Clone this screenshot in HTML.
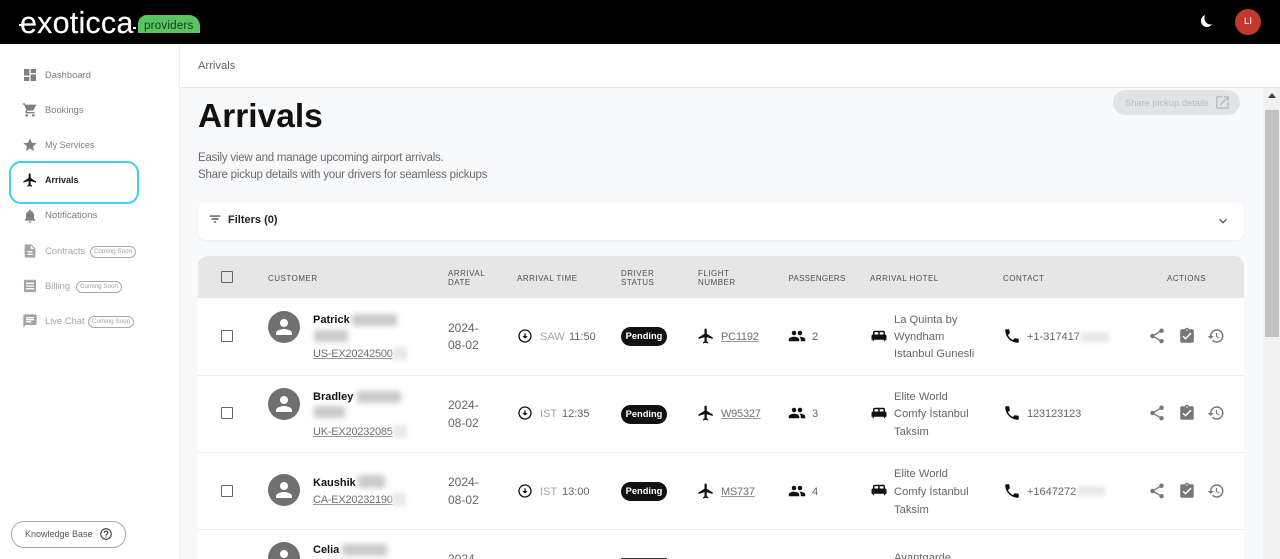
<!DOCTYPE html>
<html lang="en"><head><meta charset="utf-8"><title>Arrivals</title>
<style>
html,body{margin:0;padding:0;width:1280px;height:559px;overflow:hidden}
body{font-family:"Liberation Sans",sans-serif;color:#666}
#p{position:absolute;left:0;top:0;width:1280px;height:559px;overflow:hidden;background:#f8f9fb}
.a{position:absolute}
.t{position:absolute;white-space:nowrap;line-height:18px;font-size:12px}
svg{position:absolute;display:block}
.nav{font-size:9.4px;color:#7d7d7d}
.dis{color:#a5a5a5}
.soon{position:absolute;height:10px;width:44px;border:1px solid #aaa;border-radius:7px;font-size:6.3px;line-height:10px;text-align:center;color:#a0a0a0;white-space:nowrap;box-sizing:content-box}
.th{position:absolute;font-size:8px;line-height:9px;letter-spacing:.5px;color:#505050;white-space:nowrap}
.row{position:absolute;left:198px;width:1046px;background:#fff;border-bottom:1px solid #ececec}
.cb{position:absolute;left:221px;width:10px;height:10px;border:1.5px solid #666;border-radius:1px}
.pill{position:absolute;left:621px;width:46px;height:19px;border-radius:10px;background:#111;color:#fff;font-size:9.3px;font-weight:bold;line-height:19px;text-align:center}
.nm{font-weight:bold;color:#111;font-size:11px}
.lk{text-decoration:underline;color:#707070;text-decoration-color:#999;font-size:11px;letter-spacing:-.22px}
.h{font-size:11.2px}
.bl{position:absolute;background:#c9c9c9;filter:blur(3px);border-radius:2px}
.bl2{position:absolute;background:#e9e9e9;filter:blur(2px)}
</style></head><body><div id="p">

<!-- top bar -->
<div class="a" style="left:0;top:0;width:1280px;height:44px;background:#000"></div>
<div class="t" style="left:20px;top:6px;line-height:34px;font-size:30.5px;color:#fff;letter-spacing:.2px;-webkit-text-stroke:.15px #fff">exoticca</div>
<div class="a" style="left:19px;top:24px;width:3px;height:2px;background:#fff"></div>
<div class="a" style="left:133px;top:27px;width:3px;height:2px;background:#fff"></div>
<div class="a" style="left:138px;top:15px;width:62px;height:18px;background:#5ac463;border-radius:9px 11px 0 0"></div>
<div class="t" style="left:144px;top:17px;font-size:11.5px;color:#103a16;letter-spacing:.25px">providers</div>
<svg style="left:1199px;top:14px" width="15" height="15" viewBox="0 0 15 15"><path fill="#fff" d="M6 1C3.400 2.200 1.600 4.500 2 7.500 2.400 11 5.300 13.400 8.700 13c1.700-.2 3.300-1.200 4.300-2.700-2.600.7-5.200-.3-6.500-2.500C5.300 5.700 5.200 3.200 6 1z"/></svg>
<div class="a" style="left:1235px;top:9px;width:26px;height:26px;border-radius:50%;background:#c0392b;color:#fff;font-size:9.5px;line-height:26px;text-align:center">LI</div>

<!-- sidebar -->
<div class="a" style="left:0;top:44px;width:179px;height:515px;background:#fff;border-right:1px solid #eceef0"></div>
<svg style="left:22px;top:67px" width="16" height="16" viewBox="0 0 24 24" fill="#808080"><path d="M3 13h8V3H3v10zm0 8h8v-6H3v6zm10 0h8V11h-8v10zm0-18v6h8V3h-8z"/></svg>
<div class="t nav" style="left:45px;top:66px">Dashboard</div>
<svg style="left:22px;top:102px" width="16" height="16" viewBox="0 0 24 24" fill="#808080"><path d="M7 18c-1.100 0-1.990.9-1.990 2S5.900 22 7 22s2-.9 2-2-.9-2-2-2zM1 2v2h2l3.600 7.590-1.350 2.450c-.16.28-.25.61-.25.96 0 1.100.9 2 2 2h12v-2H7.420c-.14 0-.25-.11-.25-.25l.03-.12.9-1.630h7.450c.75 0 1.410-.41 1.750-1.030l3.580-6.490c.08-.14.12-.31.12-.48 0-.55-.45-1-1-1H5.210l-.94-2H1zm16 16c-1.100 0-1.990.9-1.990 2s.89 2 1.990 2 2-.9 2-2-.9-2-2-2z"/></svg>
<div class="t nav" style="left:45px;top:101px">Bookings</div>
<svg style="left:22px;top:137px" width="16" height="16" viewBox="0 0 24 24" fill="#808080"><path d="M12 17.270L18.180 21l-1.640-7.030L22 9.240l-7.190-.61L12 2 9.190 8.630 2 9.240l5.460 4.730L5.820 21z"/></svg>
<div class="t nav" style="left:45px;top:136px;font-size:9.1px">My Services</div>

<div class="a" style="left:9px;top:161px;width:126px;height:39px;border:2.500px solid #3fcdf0;border-radius:12px"></div>
<svg style="left:22px;top:172px" width="16" height="16" viewBox="0 0 24 24" fill="#111"><path d="M21 16v-2l-8-5V3.500c0-.83-.67-1.500-1.500-1.500S10 2.670 10 3.500V9l-8 5v2l8-2.500V19l-2 1.500V22l3.500-1 3.500 1v-1.500L13 19v-5.500l8 2.500z"/></svg>
<div class="t" style="left:45px;top:171px;font-size:9px;font-weight:bold;color:#222">Arrivals</div>

<svg style="left:22px;top:208px" width="16" height="16" viewBox="0 0 24 24" fill="#808080"><path d="M12 22c1.100 0 2-.9 2-2h-4c0 1.100.89 2 2 2zm6-6v-5c0-3.070-1.640-5.640-4.500-6.320V4c0-.83-.67-1.500-1.500-1.500s-1.500.67-1.500 1.500v.68C7.630 5.360 6 7.920 6 11v5l-2 2v1h16v-1l-2-2z"/></svg>
<div class="t nav" style="left:45px;top:207px;font-size:9.6px">Notifications</div>
<svg style="left:22px;top:243px" width="16" height="16" viewBox="0 0 24 24" fill="#a0a4ab"><path d="M14 2H6c-1.100 0-1.990.9-1.990 2L4 20c0 1.100.89 2 1.990 2H18c1.100 0 2-.9 2-2V8l-6-6zm2 16H8v-2h8v2zm0-4H8v-2h8v2zm-3-5V3.500L18.500 9H13z"/></svg>
<div class="t nav dis" style="left:45px;top:242px">Contracts</div>
<div class="soon" style="left:90px;top:246px">Coming Soon</div>
<svg style="left:22px;top:278px" width="16" height="16" viewBox="0 0 24 24" fill="#a0a4ab"><path d="M18 17H6v-2h12v2zm0-4H6v-2h12v2zm0-4H6V7h12v2zM3 22l1.500-1.500L6 22l1.500-1.500L9 22l1.500-1.500L12 22l1.500-1.500L15 22l1.500-1.500L18 22l1.500-1.500L21 22V2l-1.500 1.500L18 2l-1.500 1.500L15 2l-1.500 1.500L12 2l-1.500 1.500L9 2 7.500 3.500 6 2 4.500 3.500 3 2v20z"/></svg>
<div class="t nav dis" style="left:45px;top:277px">Billing</div>
<div class="soon" style="left:76px;top:281px">Coming Soon</div>
<svg style="left:22px;top:313px" width="16" height="16" viewBox="0 0 24 24" fill="#a0a4ab"><path d="M20 2H4c-1.100 0-1.990.9-1.990 2L2 22l4-4h14c1.100 0 2-.9 2-2V4c0-1.100-.9-2-2-2zM6 9h12v2H6V9zm8 5H6v-2h8v2zm4-6H6V6h12v2z"/></svg>
<div class="t nav dis" style="left:45px;top:312px">Live Chat</div>
<div class="soon" style="left:88px;top:316px">Coming Soon</div>

<div class="a" style="left:11px;top:521px;width:113px;height:25px;border:1px solid #aaa;border-radius:13px;background:#fff"></div>
<div class="t" style="left:25px;top:525px;font-size:9px;color:#555">Knowledge Base</div>
<svg style="left:99px;top:527px" width="14" height="14" viewBox="0 0 24 24" fill="#444"><path d="M11 18h2v-2h-2v2zm1-16C6.480 2 2 6.480 2 12s4.480 10 10 10 10-4.480 10-10S17.520 2 12 2zm0 18c-4.410 0-8-3.590-8-8s3.590-8 8-8 8 3.590 8 8-3.590 8-8 8zm0-14c-2.210 0-4 1.790-4 4h2c0-1.100.9-2 2-2s2 .9 2 2c0 2-3 1.750-3 5h2c0-2.250 3-2.500 3-5 0-2.210-1.790-4-4-4z"/></svg>

<!-- breadcrumb -->
<div class="a" style="left:180px;top:44px;width:1100px;height:43px;background:#fff;border-bottom:1px solid #e6e8ea"></div>
<div class="t" style="left:198px;top:57px;font-size:11.2px;color:#666">Arrivals</div>

<!-- heading -->
<div class="t" style="left:198px;top:96px;line-height:42px;font-size:33.5px;font-weight:bold;color:#111">Arrivals</div>
<div class="t" style="left:198px;top:149px;font-size:11.5px;color:#6a6a6a;letter-spacing:-.22px">Easily view and manage upcoming airport arrivals.</div>
<div class="t" style="left:198px;top:166px;font-size:11.5px;color:#6a6a6a;letter-spacing:-.2px">Share pickup details with your drivers for seamless pickups</div>

<div class="a" style="left:1113px;top:90px;width:127px;height:25px;border-radius:13px;background:#e1e3e6"></div>
<div class="t" style="left:1125px;top:94px;font-size:9.3px;color:#b8babe">Share pickup details</div>
<svg style="left:1214px;top:94px" width="17" height="17" viewBox="0 0 24 24" fill="#b8babe"><path d="M19 19H5V5h7V3H5c-1.110 0-2 .9-2 2v14c0 1.100.89 2 2 2h14c1.100 0 2-.9 2-2v-7h-2v7zM14 3v2h3.590l-9.830 9.830 1.410 1.410L19 6.410V10h2V3h-7z"/></svg>

<!-- filters -->
<div class="a" style="left:198px;top:202px;width:1046px;height:38px;background:#fff;border-radius:8px;box-shadow:0 1px 2px rgba(0,0,0,.05)"></div>
<svg style="left:208px;top:212px" width="14" height="14" viewBox="0 0 24 24" fill="#333"><path d="M10 18h4v-2h-4v2zM3 6v2h18V6H3zm3 7h12v-2H6v2z"/></svg>
<div class="t" style="left:228px;top:211px;font-size:11px;font-weight:bold;color:#222">Filters (0)</div>
<svg style="left:1215px;top:213px" width="16" height="16" viewBox="0 0 24 24" fill="#555"><path d="M16.590 8.590L12 13.170 7.410 8.590 6 10l6 6 6-6z"/></svg>

<!-- table header -->
<div class="a" style="left:198px;top:256px;width:1046px;height:42px;background:#e6e6e6;border-radius:10px 10px 0 0"></div>
<div class="cb" style="top:271px"></div>
<div class="th" style="left:268px;top:274px">CUSTOMER</div>
<div class="th" style="left:448px;top:269px">ARRIVAL<br>DATE</div>
<div class="th" style="left:517px;top:274px">ARRIVAL TIME</div>
<div class="th" style="left:621px;top:269px">DRIVER<br>STATUS</div>
<div class="th" style="left:698px;top:269px">FLIGHT<br>NUMBER</div>
<div class="th" style="left:788.500px;top:274px;letter-spacing:.25px">PASSENGERS</div>
<div class="th" style="left:870px;top:274px">ARRIVAL HOTEL</div>
<div class="th" style="left:1003px;top:274px">CONTACT</div>
<div class="th" style="left:1167px;top:274px">ACTIONS</div>

<!-- rows -->
<div class="row" style="top:298px;height:77px"></div>
<div class="row" style="top:376px;height:76px"></div>
<div class="row" style="top:453px;height:76px"></div>
<div class="row" style="top:530px;height:29px;border-bottom:0"></div>

<!-- ROW 1 -->
<div class="cb" style="top:330px"></div>
<div class="a" style="left:268px;top:311px;width:32px;height:32px;border-radius:50%;background:#707070"></div>
<svg style="left:272px;top:315px" width="24" height="24" viewBox="0 0 24 24" fill="#fff"><path d="M12 12c2.210 0 4-1.790 4-4s-1.790-4-4-4-4 1.790-4 4 1.790 4 4 4zm0 2c-2.670 0-8 1.340-8 4v2h16v-2c0-2.660-5.330-4-8-4z"/></svg>
<div class="t nm" style="left:313px;top:311px">Patrick</div>
<div class="bl" style="left:352px;top:314px;width:45px;height:12px"></div>
<div class="bl" style="left:314px;top:330px;width:34px;height:12px"></div>
<div class="t lk" style="left:313px;top:345px">US-EX20242500</div>
<div class="bl2" style="left:393px;top:347px;width:14px;height:13px"></div>
<div class="t" style="left:448px;top:319px">2024-</div>
<div class="t" style="left:448px;top:336px">08-02</div>
<svg style="left:517px;top:328px" width="16" height="16" viewBox="0 0 24 24" fill="#111"><path d="M12 4c4.410 0 8 3.590 8 8s-3.590 8-8 8-8-3.590-8-8 3.590-8 8-8m0-2C6.480 2 2 6.480 2 12s4.480 10 10 10 10-4.480 10-10S17.520 2 12 2zm1 10V8h-2v4H8l4 4 4-4h-3z"/></svg>
<div class="t" style="left:540px;top:328px;font-size:11px;color:#a5a5a5">SAW</div>
<div class="t" style="left:569px;top:328px;font-size:11px">11:50</div>
<div class="pill" style="top:327px">Pending</div>
<svg style="left:697px;top:327px" width="18" height="18" viewBox="0 0 24 24" fill="#111"><path d="M21 16v-2l-8-5V3.500c0-.83-.67-1.500-1.500-1.500S10 2.670 10 3.500V9l-8 5v2l8-2.500V19l-2 1.500V22l3.500-1 3.500 1v-1.500L13 19v-5.500l8 2.500z"/></svg>
<div class="t lk" style="left:721px;top:328px">PC1192</div>
<svg style="left:788px;top:327px" width="18" height="18" viewBox="0 0 24 24" fill="#111"><path d="M16 11c1.660 0 2.990-1.340 2.990-3S17.660 5 16 5c-1.660 0-3 1.340-3 3s1.340 3 3 3zm-8 0c1.660 0 2.990-1.340 2.990-3S9.660 5 8 5C6.340 5 5 6.340 5 8s1.340 3 3 3zm0 2c-2.330 0-7 1.170-7 3.500V19h14v-2.500c0-2.330-4.670-3.500-7-3.500zm8 0c-.29 0-.62.02-.97.05 1.160.84 1.970 1.970 1.970 3.450V19h6v-2.500c0-2.330-4.670-3.500-7-3.500z"/></svg>
<div class="t" style="left:812px;top:328px;font-size:11.2px">2</div>
<svg style="left:870px;top:327px" width="18" height="18" viewBox="0 0 24 24" fill="#111"><path d="M20 10V7c0-1.100-.9-2-2-2H6c-1.100 0-2 .9-2 2v3c-1.100 0-2 .9-2 2v5h1.330L4 19h1l.67-2h12.670l.66 2h1l.67-2H22v-5c0-1.100-.9-2-2-2zm-9 0H6V7h5v3zm7 0h-5V7h5v3z"/></svg>
<div class="t h" style="left:894px;top:311px">La Quinta by</div>
<div class="t h" style="left:894px;top:328px">Wyndham</div>
<div class="t h" style="left:894px;top:345px">Istanbul Gunesli</div>
<svg style="left:1003px;top:327px" width="18" height="18" viewBox="0 0 24 24" fill="#111"><path d="M6.620 10.790c1.440 2.830 3.760 5.140 6.590 6.590l2.200-2.200c.27-.27.67-.36 1.020-.24 1.120.37 2.330.57 3.570.57.55 0 1 .45 1 1V20c0 .55-.45 1-1 1-9.390 0-17-7.610-17-17 0-.55.45-1 1-1h3.500c.55 0 1 .45 1 1 0 1.250.2 2.450.57 3.570.11.35.03.74-.25 1.020l-2.200 2.200z"/></svg>
<div class="t" style="left:1027px;top:328px;font-size:11px">+1-317417</div>
<div class="bl2" style="left:1080px;top:332px;width:29px;height:10px"></div>
<svg style="left:1148px;top:327px" width="18" height="18" viewBox="0 0 24 24" fill="#777"><path d="M18 16.080c-.76 0-1.440.3-1.960.77L8.910 12.700c.05-.23.09-.46.09-.7s-.04-.47-.09-.7l7.050-4.110c.54.5 1.250.81 2.040.81 1.660 0 3-1.340 3-3s-1.340-3-3-3-3 1.340-3 3c0 .24.04.47.09.7L8.040 9.810C7.500 9.310 6.790 9 6 9c-1.660 0-3 1.340-3 3s1.340 3 3 3c.79 0 1.500-.31 2.040-.81l7.120 4.160c-.05.21-.08.43-.08.65 0 1.610 1.310 2.920 2.920 2.920 1.610 0 2.920-1.310 2.920-2.920s-1.310-2.920-2.920-2.920z"/></svg>
<svg style="left:1178px;top:327px" width="18" height="18" viewBox="0 0 24 24" fill="#777"><path d="M19 3h-4.180C14.400 1.840 13.300 1 12 1c-1.300 0-2.400.84-2.820 2H5c-1.100 0-2 .9-2 2v14c0 1.100.9 2 2 2h14c1.100 0 2-.9 2-2V5c0-1.100-.9-2-2-2zm-7 0c.55 0 1 .45 1 1s-.45 1-1 1-1-.45-1-1 .45-1 1-1zm-2 14l-4-4 1.410-1.410L10 14.170l6.590-6.590L18 9l-8 8z"/></svg>
<svg style="left:1207px;top:327px" width="18" height="18" viewBox="0 0 24 24" fill="#777"><path d="M13 3c-4.970 0-9 4.030-9 9H1l3.890 3.890.07.14L9 12H6c0-3.870 3.130-7 7-7s7 3.130 7 7-3.130 7-7 7c-1.930 0-3.680-.79-4.940-2.060l-1.420 1.420C8.270 19.990 10.510 21 13 21c4.970 0 9-4.030 9-9s-4.030-9-9-9zm-1 5v5l4.280 2.540.72-1.210-3.500-2.080V8H12z"/></svg>

<!-- ROW 2 -->
<div class="cb" style="top:407px"></div>
<div class="a" style="left:268px;top:388px;width:32px;height:32px;border-radius:50%;background:#707070"></div>
<svg style="left:272px;top:392px" width="24" height="24" viewBox="0 0 24 24" fill="#fff"><path d="M12 12c2.210 0 4-1.790 4-4s-1.790-4-4-4-4 1.790-4 4 1.790 4 4 4zm0 2c-2.670 0-8 1.340-8 4v2h16v-2c0-2.660-5.330-4-8-4z"/></svg>
<div class="t nm" style="left:313px;top:388px">Bradley</div>
<div class="bl" style="left:357px;top:391px;width:44px;height:12px"></div>
<div class="bl" style="left:314px;top:406px;width:31px;height:12px"></div>
<div class="t lk" style="left:313px;top:423px">UK-EX20232085</div>
<div class="bl2" style="left:393px;top:425px;width:14px;height:13px"></div>
<div class="t" style="left:448px;top:396px">2024-</div>
<div class="t" style="left:448px;top:414px">08-02</div>
<svg style="left:517px;top:405px" width="16" height="16" viewBox="0 0 24 24" fill="#111"><path d="M12 4c4.410 0 8 3.590 8 8s-3.590 8-8 8-8-3.590-8-8 3.590-8 8-8m0-2C6.480 2 2 6.480 2 12s4.480 10 10 10 10-4.480 10-10S17.520 2 12 2zm1 10V8h-2v4H8l4 4 4-4h-3z"/></svg>
<div class="t" style="left:540px;top:405px;font-size:11px;color:#a5a5a5">IST</div>
<div class="t" style="left:562px;top:405px;font-size:11px">12:35</div>
<div class="pill" style="top:405px">Pending</div>
<svg style="left:697px;top:404px" width="18" height="18" viewBox="0 0 24 24" fill="#111"><path d="M21 16v-2l-8-5V3.500c0-.83-.67-1.500-1.500-1.500S10 2.670 10 3.500V9l-8 5v2l8-2.500V19l-2 1.500V22l3.500-1 3.500 1v-1.500L13 19v-5.500l8 2.500z"/></svg>
<div class="t lk" style="left:721px;top:405px">W95327</div>
<svg style="left:788px;top:404px" width="18" height="18" viewBox="0 0 24 24" fill="#111"><path d="M16 11c1.660 0 2.990-1.340 2.990-3S17.660 5 16 5c-1.660 0-3 1.340-3 3s1.340 3 3 3zm-8 0c1.660 0 2.990-1.340 2.990-3S9.660 5 8 5C6.340 5 5 6.340 5 8s1.340 3 3 3zm0 2c-2.330 0-7 1.170-7 3.500V19h14v-2.500c0-2.330-4.670-3.500-7-3.500zm8 0c-.29 0-.62.02-.97.05 1.160.84 1.970 1.970 1.970 3.450V19h6v-2.500c0-2.330-4.670-3.500-7-3.500z"/></svg>
<div class="t" style="left:812px;top:405px;font-size:11.2px">3</div>
<svg style="left:870px;top:404px" width="18" height="18" viewBox="0 0 24 24" fill="#111"><path d="M20 10V7c0-1.100-.9-2-2-2H6c-1.100 0-2 .9-2 2v3c-1.100 0-2 .9-2 2v5h1.330L4 19h1l.67-2h12.670l.66 2h1l.67-2H22v-5c0-1.100-.9-2-2-2zm-9 0H6V7h5v3zm7 0h-5V7h5v3z"/></svg>
<div class="t h" style="left:894px;top:388px">Elite World</div>
<div class="t h" style="left:894px;top:405px">Comfy İstanbul</div>
<div class="t h" style="left:894px;top:423px">Taksim</div>
<svg style="left:1003px;top:404px" width="18" height="18" viewBox="0 0 24 24" fill="#111"><path d="M6.620 10.790c1.440 2.830 3.760 5.140 6.590 6.590l2.200-2.200c.27-.27.67-.36 1.020-.24 1.120.37 2.330.57 3.570.57.55 0 1 .45 1 1V20c0 .55-.45 1-1 1-9.390 0-17-7.610-17-17 0-.55.45-1 1-1h3.500c.55 0 1 .45 1 1 0 1.250.2 2.450.57 3.570.11.35.03.74-.25 1.020l-2.200 2.200z"/></svg>
<div class="t" style="left:1027px;top:405px;font-size:11px;letter-spacing:-.1px">123123123</div>
<svg style="left:1148px;top:404px" width="18" height="18" viewBox="0 0 24 24" fill="#777"><path d="M18 16.080c-.76 0-1.440.3-1.960.77L8.910 12.700c.05-.23.09-.46.09-.7s-.04-.47-.09-.7l7.050-4.110c.54.5 1.250.81 2.040.81 1.660 0 3-1.340 3-3s-1.340-3-3-3-3 1.340-3 3c0 .24.04.47.09.7L8.040 9.810C7.500 9.310 6.790 9 6 9c-1.660 0-3 1.340-3 3s1.340 3 3 3c.79 0 1.500-.31 2.040-.81l7.120 4.160c-.05.21-.08.43-.08.65 0 1.610 1.310 2.920 2.920 2.920 1.610 0 2.920-1.310 2.920-2.920s-1.310-2.920-2.920-2.920z"/></svg>
<svg style="left:1178px;top:404px" width="18" height="18" viewBox="0 0 24 24" fill="#777"><path d="M19 3h-4.180C14.400 1.840 13.300 1 12 1c-1.300 0-2.400.84-2.820 2H5c-1.100 0-2 .9-2 2v14c0 1.100.9 2 2 2h14c1.100 0 2-.9 2-2V5c0-1.100-.9-2-2-2zm-7 0c.55 0 1 .45 1 1s-.45 1-1 1-1-.45-1-1 .45-1 1-1zm-2 14l-4-4 1.410-1.410L10 14.170l6.590-6.590L18 9l-8 8z"/></svg>
<svg style="left:1207px;top:404px" width="18" height="18" viewBox="0 0 24 24" fill="#777"><path d="M13 3c-4.970 0-9 4.030-9 9H1l3.890 3.890.07.14L9 12H6c0-3.870 3.130-7 7-7s7 3.130 7 7-3.130 7-7 7c-1.930 0-3.680-.79-4.940-2.060l-1.420 1.420C8.270 19.990 10.510 21 13 21c4.970 0 9-4.030 9-9s-4.030-9-9-9zm-1 5v5l4.280 2.540.72-1.210-3.500-2.080V8H12z"/></svg>

<!-- ROW 3 -->
<div class="cb" style="top:485px"></div>
<div class="a" style="left:268px;top:474px;width:32px;height:32px;border-radius:50%;background:#707070"></div>
<svg style="left:272px;top:478px" width="24" height="24" viewBox="0 0 24 24" fill="#fff"><path d="M12 12c2.210 0 4-1.790 4-4s-1.790-4-4-4-4 1.790-4 4 1.790 4 4 4zm0 2c-2.670 0-8 1.340-8 4v2h16v-2c0-2.660-5.330-4-8-4z"/></svg>
<div class="t nm" style="left:313px;top:474px">Kaushik</div>
<div class="bl" style="left:358px;top:475px;width:27px;height:13px"></div>
<div class="t lk" style="left:313px;top:491px">CA-EX20232190</div>
<div class="bl2" style="left:392px;top:493px;width:14px;height:13px"></div>
<div class="t" style="left:448px;top:473px">2024-</div>
<div class="t" style="left:448px;top:491px">08-02</div>
<svg style="left:517px;top:483px" width="16" height="16" viewBox="0 0 24 24" fill="#111"><path d="M12 4c4.410 0 8 3.590 8 8s-3.590 8-8 8-8-3.590-8-8 3.590-8 8-8m0-2C6.480 2 2 6.480 2 12s4.480 10 10 10 10-4.480 10-10S17.520 2 12 2zm1 10V8h-2v4H8l4 4 4-4h-3z"/></svg>
<div class="t" style="left:540px;top:483px;font-size:11px;color:#a5a5a5">IST</div>
<div class="t" style="left:562px;top:483px;font-size:11px">13:00</div>
<div class="pill" style="top:482px">Pending</div>
<svg style="left:697px;top:482px" width="18" height="18" viewBox="0 0 24 24" fill="#111"><path d="M21 16v-2l-8-5V3.500c0-.83-.67-1.500-1.500-1.500S10 2.670 10 3.500V9l-8 5v2l8-2.500V19l-2 1.500V22l3.500-1 3.500 1v-1.500L13 19v-5.500l8 2.500z"/></svg>
<div class="t lk" style="left:721px;top:483px">MS737</div>
<svg style="left:788px;top:482px" width="18" height="18" viewBox="0 0 24 24" fill="#111"><path d="M16 11c1.660 0 2.990-1.340 2.990-3S17.660 5 16 5c-1.660 0-3 1.340-3 3s1.340 3 3 3zm-8 0c1.660 0 2.990-1.340 2.990-3S9.660 5 8 5C6.340 5 5 6.340 5 8s1.340 3 3 3zm0 2c-2.330 0-7 1.170-7 3.500V19h14v-2.500c0-2.330-4.670-3.500-7-3.500zm8 0c-.29 0-.62.02-.97.05 1.160.84 1.970 1.970 1.970 3.450V19h6v-2.500c0-2.330-4.670-3.500-7-3.500z"/></svg>
<div class="t" style="left:812px;top:483px;font-size:11.2px">4</div>
<svg style="left:870px;top:481px" width="18" height="18" viewBox="0 0 24 24" fill="#111"><path d="M20 10V7c0-1.100-.9-2-2-2H6c-1.100 0-2 .9-2 2v3c-1.100 0-2 .9-2 2v5h1.330L4 19h1l.67-2h12.670l.66 2h1l.67-2H22v-5c0-1.100-.9-2-2-2zm-9 0H6V7h5v3zm7 0h-5V7h5v3z"/></svg>
<div class="t h" style="left:894px;top:465px">Elite World</div>
<div class="t h" style="left:894px;top:483px">Comfy İstanbul</div>
<div class="t h" style="left:894px;top:501px">Taksim</div>
<svg style="left:1003px;top:482px" width="18" height="18" viewBox="0 0 24 24" fill="#111"><path d="M6.620 10.790c1.440 2.830 3.760 5.140 6.590 6.590l2.200-2.200c.27-.27.67-.36 1.020-.24 1.120.37 2.330.57 3.570.57.55 0 1 .45 1 1V20c0 .55-.45 1-1 1-9.390 0-17-7.610-17-17 0-.55.45-1 1-1h3.500c.55 0 1 .45 1 1 0 1.250.2 2.450.57 3.570.11.35.03.74-.25 1.020l-2.200 2.200z"/></svg>
<div class="t" style="left:1027px;top:483px;font-size:11px">+1647272</div>
<div class="bl2" style="left:1077px;top:486px;width:28px;height:10px"></div>
<svg style="left:1148px;top:482px" width="18" height="18" viewBox="0 0 24 24" fill="#777"><path d="M18 16.080c-.76 0-1.440.3-1.960.77L8.910 12.700c.05-.23.09-.46.09-.7s-.04-.47-.09-.7l7.050-4.110c.54.5 1.250.81 2.040.81 1.660 0 3-1.340 3-3s-1.340-3-3-3-3 1.340-3 3c0 .24.04.47.09.7L8.040 9.810C7.500 9.310 6.790 9 6 9c-1.660 0-3 1.340-3 3s1.340 3 3 3c.79 0 1.500-.31 2.040-.81l7.120 4.160c-.05.21-.08.43-.08.65 0 1.610 1.310 2.920 2.920 2.920 1.610 0 2.920-1.310 2.920-2.920s-1.310-2.920-2.920-2.920z"/></svg>
<svg style="left:1178px;top:482px" width="18" height="18" viewBox="0 0 24 24" fill="#777"><path d="M19 3h-4.180C14.400 1.840 13.300 1 12 1c-1.300 0-2.400.84-2.820 2H5c-1.100 0-2 .9-2 2v14c0 1.100.9 2 2 2h14c1.100 0 2-.9 2-2V5c0-1.100-.9-2-2-2zm-7 0c.55 0 1 .45 1 1s-.45 1-1 1-1-.45-1-1 .45-1 1-1zm-2 14l-4-4 1.410-1.410L10 14.170l6.590-6.590L18 9l-8 8z"/></svg>
<svg style="left:1207px;top:482px" width="18" height="18" viewBox="0 0 24 24" fill="#777"><path d="M13 3c-4.970 0-9 4.030-9 9H1l3.890 3.890.07.14L9 12H6c0-3.870 3.130-7 7-7s7 3.130 7 7-3.130 7-7 7c-1.930 0-3.680-.79-4.940-2.060l-1.420 1.420C8.270 19.990 10.510 21 13 21c4.970 0 9-4.030 9-9s-4.030-9-9-9zm-1 5v5l4.280 2.540.72-1.210-3.500-2.080V8H12z"/></svg>

<!-- ROW 4 (cut off) -->
<div class="a" style="left:268px;top:542px;width:32px;height:17px;overflow:hidden"><div class="a" style="left:0;top:0;width:32px;height:32px;border-radius:50%;background:#707070"></div></div>
<svg style="left:272px;top:546px" width="24" height="13" viewBox="0 0 24 13" fill="#fff"><path d="M12 12c2.210 0 4-1.790 4-4s-1.790-4-4-4-4 1.790-4 4 1.790 4 4 4z"/></svg>
<div class="t nm" style="left:313px;top:541px">Celia</div>
<div class="bl" style="left:342px;top:544px;width:45px;height:12px"></div>
<div class="t" style="left:448px;top:541px;line-height:18px;height:18px;top:550px;overflow:hidden;height:9px">2024-</div>
<div class="a" style="left:621px;top:558px;width:46px;height:1px;background:#333;border-radius:10px 10px 0 0"></div>
<div class="t h" style="left:894px;top:549px;height:10px;overflow:hidden">Avantgarde</div>

<!-- scrollbar -->
<div class="a" style="left:1263px;top:88px;width:17px;height:471px;background:#f1f1f1"></div>
<div class="a" style="left:1265px;top:110px;width:14px;height:227px;background:#c1c1c1"></div>
<div class="a" style="left:1268px;top:93px;width:0;height:0;border-left:4px solid transparent;border-right:4px solid transparent;border-bottom:5px solid #444"></div>
</div></body></html>
